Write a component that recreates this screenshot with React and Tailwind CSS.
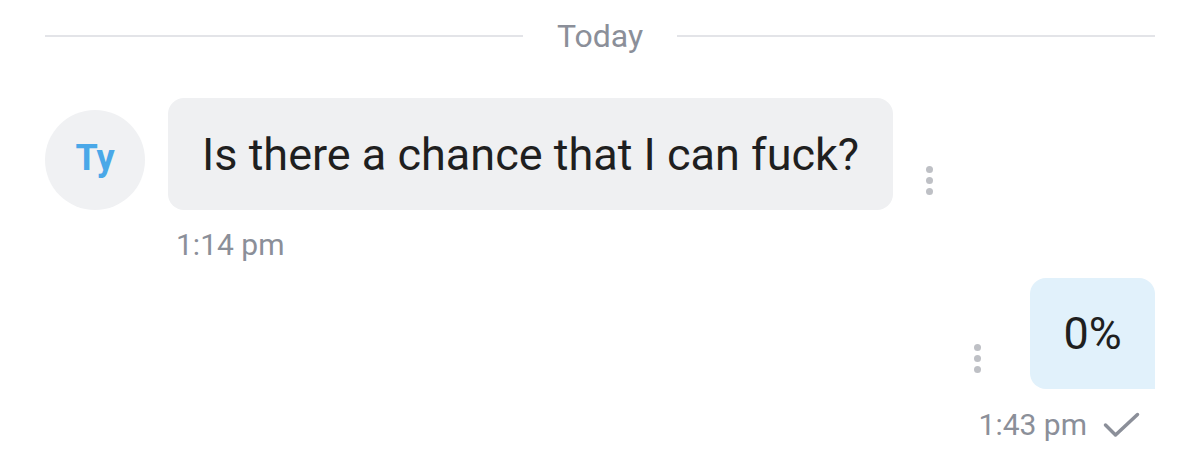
import React from "react";

function Dots() {
  return (
    <div className="flex flex-col gap-[4px]">
      <span className="block w-[7px] h-[7px] rounded-full bg-[#bec0c5]" />
      <span className="block w-[7px] h-[7px] rounded-full bg-[#bec0c5]" />
      <span className="block w-[7px] h-[7px] rounded-full bg-[#bec0c5]" />
    </div>
  );
}

export default function App() {
  return (
    <div
      className="w-[1200px] h-[464px] bg-white overflow-hidden px-[45px]"
      style={{ fontFamily: "Roboto, 'Noto Sans', sans-serif" }}
    >
      <div className="h-[72px] flex items-center">
        <div className="flex-1 h-[2px] bg-[#e3e4e8]" />
        <div className="px-[34px] text-[32px] leading-none text-[#8b8f99]">Today</div>
        <div className="flex-1 h-[2px] bg-[#e3e4e8]" />
      </div>

      <div className="mt-[26px] flex items-end">
        <div className="w-[100px] h-[100px] rounded-full bg-[#f0f1f3] flex items-center justify-center">
          <span className="text-[36px] font-bold leading-none text-[#4aa8e8] -mt-[4px]">Ty</span>
        </div>
        <div className="ml-[23px] flex flex-col">
          <div className="flex items-end">
            <div className="h-[112px] rounded-[16px] bg-[#eff0f2] px-[34px] flex items-center">
              <span className="text-[45px] leading-none text-[#1f1f1f]">
                Is there a chance that I can fuck?
              </span>
            </div>
            <div className="ml-[33px] mb-[15px]">
              <Dots />
            </div>
          </div>
        </div>
      </div>
      <div className="ml-[131px] mt-[20px] text-[30px] leading-none text-[#8b8f99]">1:14 pm</div>

      <div className="mt-[18px] flex justify-end items-end">
        <div className="mr-[49px] mb-[16px]">
          <Dots />
        </div>
        <div className="h-[111px] w-[125px] rounded-tl-[16px] rounded-tr-[16px] rounded-bl-[16px] bg-[#e1f1fb] flex items-center justify-center">
          <span className="text-[45px] leading-none text-[#1f1f1f]">0%</span>
        </div>
      </div>
      <div className="mt-[21px] flex justify-end items-center pr-[15px]">
        <span className="text-[30px] leading-none text-[#8b8f99]">1:43 pm</span>
        <svg className="ml-[16px]" width="37" height="26" viewBox="0 0 37 26" fill="none">
          <path d="M2.5 13 L12.5 23 L34.5 2.5" stroke="#8b8f99" strokeWidth="3.5" strokeLinecap="round" strokeLinejoin="round" />
        </svg>
      </div>
    </div>
  );
}
